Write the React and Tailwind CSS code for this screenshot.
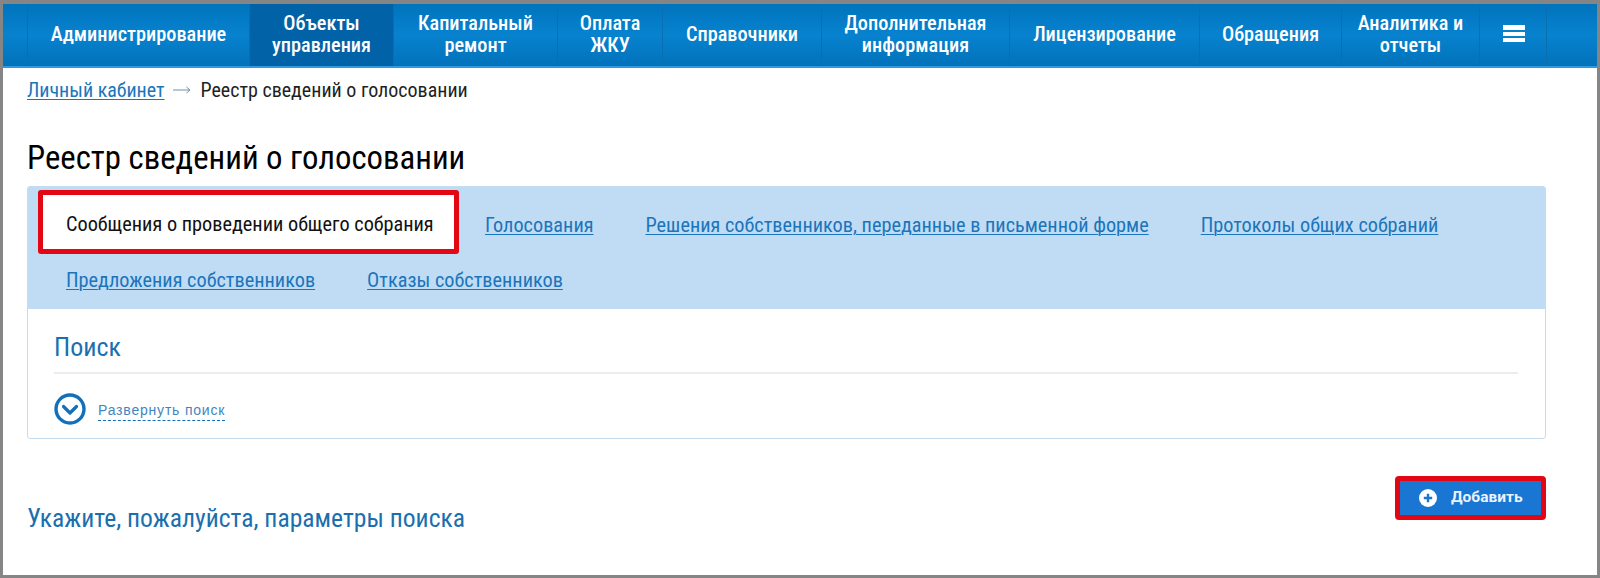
const items = [
  { w: 'w-[222px]', t: ['Администрирование'] },
  { w: 'w-[144px]', t: ['Объекты', 'управления'], active: true },
  { w: 'w-[164px]', t: ['Капитальный', 'ремонт'] },
  { w: 'w-[105px]', t: ['Оплата', 'ЖКУ'] },
  { w: 'w-[159px]', t: ['Справочники'] },
  { w: 'w-[188px]', t: ['Дополнительная', 'информация'] },
  { w: 'w-[190px]', t: ['Лицензирование'] },
  { w: 'w-[142px]', t: ['Обращения'] },
  { w: 'w-[138px]', t: ['Аналитика и', 'отчеты'] },
];

function Tab({ children }) {
  return (
    <a className="text-[20.3px] leading-[24px] text-[#1b75bb] underline underline-offset-2 decoration-1">{children}</a>
  );
}

export default function App() {
  return (
    <div className="h-[578px] w-[1600px] overflow-hidden border-x-[3px] border-t-4 border-b-[3px] border-[#858585] bg-white font-['Roboto_Condensed','Roboto',sans-serif]">
      <nav className="flex h-[64px] border-b-2 border-[#2f9ae0] bg-gradient-to-b from-[#0074bd] via-[#0882cf] to-[#0272ba] text-white">
        <div className="w-[25px] shrink-0 border-r border-[#0a6fb0]" />
        {items.map((it, i) => (
          <div
            key={i}
            className={`${it.w} flex shrink-0 flex-col items-center justify-center border-r border-[#0a6fb0] pb-[3px] text-center text-[20.3px] leading-[22px] font-medium ${it.active ? 'bg-[#0262a8]' : ''}`}
          >
            {it.t.map((l) => <span key={l}>{l}</span>)}
          </div>
        ))}
        <div className="flex w-[67px] shrink-0 flex-col items-center justify-center gap-[2px] border-r border-[#0a6fb0] pb-[3px] pl-[1px]">
          <span className="h-[5px] w-[22px] bg-white" />
          <span className="h-[4px] w-[22px] bg-white" />
          <span className="h-[4px] w-[22px] bg-white" />
        </div>
      </nav>

      <div className="px-[24px]">
        <div className="flex h-[43px] items-center text-[20px] text-[#1f1f1f]">
          <a className="text-[#1b75bb] underline underline-offset-2 decoration-1">Личный кабинет</a>
          <svg width="18" height="8" viewBox="0 0 18 8" fill="none" className="mx-[8px] shrink-0">
            <path d="M0 4h17M13.5 1 17 4l-3.5 3" stroke="#6f8ea6" strokeWidth="1" />
          </svg>
          <span className="ml-[2px]">Реестр сведений о голосовании</span>
        </div>

        <h1 className="mt-[23px] h-[52px] text-[32.8px] leading-[48px] font-normal text-black">Реестр сведений о голосовании</h1>

        <section className="w-[1519px] rounded-[3px] border border-[#c4dcf0]">
          <div className="h-[122px] bg-[#c0dcf5]">
            <div className="flex h-[67px] items-start pl-[10px] pt-[3px]">
              <div className="flex h-[64px] w-[421px] items-center rounded-[3px] border-[5px] border-[#e30613] bg-white pl-[23px] pt-[5px] text-[20.3px] text-[#111]">
                Сообщения о проведении общего собрания
              </div>
              <div className="flex h-[64px] items-center gap-[52px] pl-[26px] pt-[5px]">
                <Tab>Голосования</Tab>
                <Tab>Решения собственников, переданные в письменной форме</Tab>
                <Tab>Протоколы общих собраний</Tab>
              </div>
            </div>
            <div className="flex items-center gap-[52px] pl-[38px] pt-[14px]">
              <Tab>Предложения собственников</Tab>
              <Tab>Отказы собственников</Tab>
            </div>
          </div>
          <div className="h-[129px] pl-[26px] pr-[27px]">
            <div className="h-[65px] border-b-2 border-[#ececec] pt-[21px] text-[26px] leading-[34px] text-[#1b6fae]">Поиск</div>
            <div className="mt-[19px] flex items-center gap-[12px]">
              <svg width="32" height="32" viewBox="0 0 32 32" fill="none" className="shrink-0">
                <circle cx="16" cy="16" r="14" stroke="#1270bb" strokeWidth="3.4" />
                <path d="M9.5 13.5 L16 20 L22.5 13.5" stroke="#1270bb" strokeWidth="3.2" strokeLinecap="round" strokeLinejoin="round" />
              </svg>
              <span className="mt-[2px] border-b border-dashed border-[#1270bb] font-['Liberation_Sans',sans-serif] text-[14px] leading-[20px] tracking-[0.8px] text-[#3f86c0]">Развернуть поиск</span>
            </div>
          </div>
        </section>

        <div className="flex w-[1519px] items-start justify-between">
          <h2 className="mt-[62px] text-[25.6px] leading-[34px] font-normal text-[#1b6fae]">Укажите, пожалуйста, параметры поиска</h2>
          <button className="mt-[37px] flex h-[44px] w-[151px] items-center rounded-[4px] border-[5px] border-[#e30613] bg-[#1976d2] pl-[19px] font-['Roboto',sans-serif] text-[15.5px] font-bold text-[#eaf3fb]">
            <svg width="18" height="18" viewBox="0 0 18 18" className="shrink-0">
              <circle cx="9" cy="9" r="9" fill="#fff" />
              <path d="M9 4.8v8.4M4.8 9h8.4" stroke="#1976d2" strokeWidth="2.4" />
            </svg>
            <span className="ml-[14px]">Добавить</span>
          </button>
        </div>
      </div>
    </div>
  );
}
